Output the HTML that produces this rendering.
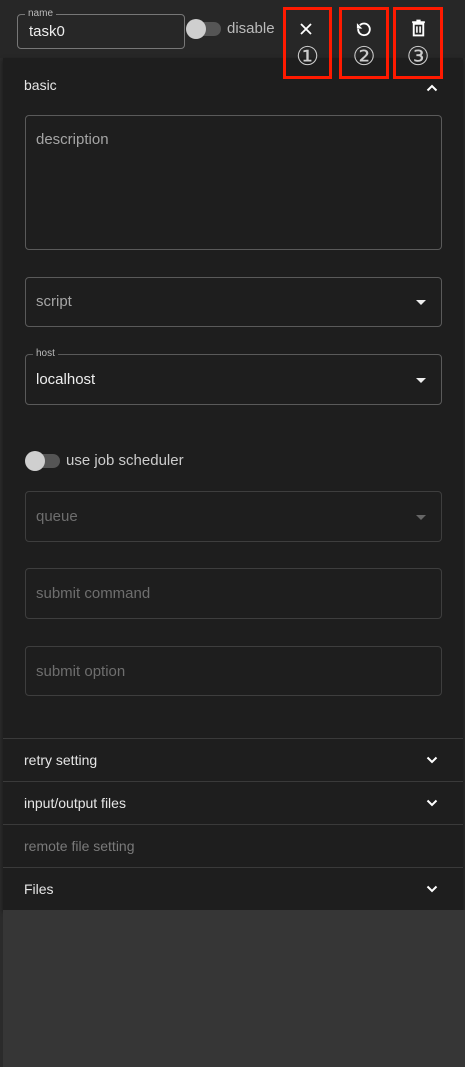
<!DOCTYPE html>
<html><head><meta charset="utf-8"><style>
*{box-sizing:border-box;margin:0;padding:0}
body{width:465px;height:1067px;background:#2b2b2b;font-family:"Liberation Sans","Noto Sans CJK JP",sans-serif;position:relative;overflow:hidden;color:#e6e6e6}
.top{position:absolute;left:0;top:0;width:465px;height:58px;background:#272727}
.panel{position:absolute;left:3px;top:58px;width:460px;height:852px;background:#1e1e1e;box-shadow:0 2px 4px rgba(0,0,0,.5)}
.below{position:absolute;left:3px;top:910px;width:462px;height:157px;background:#363636}
.fld{position:absolute;border:1px solid #5a5a5a;border-radius:4px}
.lbl{position:absolute;font-size:10px;color:#bbb;background:#1e1e1e;padding:0 3px;top:-7px;left:7px;line-height:12px}
.ph{position:absolute;left:10px;font-size:15px;color:#a5a5a5}
.caret{position:absolute;right:15px;width:0;height:0;border-left:5px solid transparent;border-right:5px solid transparent;border-top:5px solid #eee}
.sec{position:absolute;left:3px;width:460px;height:43px;border-top:1px solid #3a3a3a;font-size:14px;line-height:42px;padding-left:21px}
.chev{position:absolute;right:25px;top:17px}
.red{position:absolute;top:7px;height:72px;border:3px solid #ff1a00}
.num{position:absolute;top:33px;font-size:26px;line-height:28px;color:#ccc;width:100%;text-align:center;font-family:"DejaVu Sans",sans-serif}
.sw{position:absolute;width:34px;height:14px;border-radius:7px;background:#555}
.sw i{position:absolute;left:-1px;top:-3px;width:20px;height:20px;border-radius:50%;background:#cfcfcf}
</style></head><body>
<div class="top"></div>
<div class="panel"></div>
<div class="below"></div>

<div class="fld" style="left:17px;top:14px;width:168px;height:35px;border-color:#777">
 <div class="lbl" style="background:#272727">name</div>
 <div style="position:absolute;left:11px;top:8px;font-size:15px;color:#eee">task0</div>
</div>
<div class="sw" style="left:187px;top:22px"><i></i></div>
<div style="position:absolute;left:227px;top:20px;font-size:15px;color:#bbb">disable</div>

<div class="red" style="left:283px;width:49px"><svg style="position:absolute;left:13px;top:12px" width="14" height="14" viewBox="0 0 14 14"><path d="M2 2L12 12M12 2L2 12" stroke="#fff" stroke-width="1.8"/></svg><div class="num">①</div></div>
<div class="red" style="left:339px;width:50px"><svg style="position:absolute;left:12px;top:9px" width="20" height="20" viewBox="0 0 24 24"><path d="M7 7.5A7 7 0 1 1 5 12" fill="none" stroke="#fff" stroke-width="2.2"/><path d="M3.5 5v6.5h6.5z" fill="#fff"/></svg><div class="num">②</div></div>
<div class="red" style="left:393px;width:50px"><svg style="position:absolute;left:14px;top:9px" width="17" height="18" viewBox="0 0 16 17"><path d="M2 3h12M6 1.5h4" stroke="#fff" stroke-width="1.8"/><path d="M3.5 4.5h9v11h-9z" fill="none" stroke="#fff" stroke-width="1.8"/><path d="M6.5 7v6M9.5 7v6" stroke="#fff" stroke-width="1.5"/></svg><div class="num">③</div></div>

<div style="position:absolute;left:24px;top:77px;font-size:14px">basic</div>
<svg style="position:absolute;left:426px;top:84px" width="12" height="8" viewBox="0 0 12 8"><path d="M1.5 6.5L6 2l4.5 4.5" fill="none" stroke="#fff" stroke-width="2"/></svg>

<div class="fld" style="left:25px;top:115px;width:417px;height:135px"><div class="ph" style="top:15px">description</div></div>
<div class="fld" style="left:25px;top:277px;width:417px;height:50px"><div class="ph" style="top:15px">script</div><div class="caret" style="top:22px"></div></div>
<div class="fld" style="left:25px;top:354px;width:417px;height:51px"><div class="lbl">host</div><div class="ph" style="top:16px;color:#eee">localhost</div><div class="caret" style="top:23px"></div></div>

<div class="sw" style="left:26px;top:454px"><i></i></div>
<div style="position:absolute;left:66px;top:452px;font-size:15px;color:#ccc">use job scheduler</div>

<div class="fld" style="left:25px;top:491px;width:417px;height:51px;border-color:#3e3e3e"><div class="ph" style="top:16px;color:#6e6e6e">queue</div><div class="caret" style="top:23px;border-top-color:#666"></div></div>
<div class="fld" style="left:25px;top:568px;width:417px;height:51px;border-color:#3e3e3e"><div class="ph" style="top:16px;color:#6e6e6e">submit command</div></div>
<div class="fld" style="left:25px;top:646px;width:417px;height:50px;border-color:#3e3e3e"><div class="ph" style="top:16px;color:#6e6e6e">submit option</div></div>

<div class="sec" style="top:738px">retry setting<svg class="chev" width="12" height="8" viewBox="0 0 12 8"><path d="M1.5 1.5L6 6l4.5-4.5" fill="none" stroke="#fff" stroke-width="2"/></svg></div>
<div class="sec" style="top:781px">input/output files<svg class="chev" width="12" height="8" viewBox="0 0 12 8"><path d="M1.5 1.5L6 6l4.5-4.5" fill="none" stroke="#fff" stroke-width="2"/></svg></div>
<div class="sec" style="top:824px;color:#7a7a7a">remote file setting</div>
<div class="sec" style="top:867px">Files<svg class="chev" width="12" height="8" viewBox="0 0 12 8"><path d="M1.5 1.5L6 6l4.5-4.5" fill="none" stroke="#fff" stroke-width="2"/></svg></div>
</body></html>
